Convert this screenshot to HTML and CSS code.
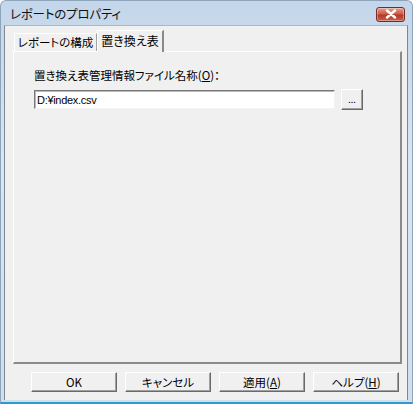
FILE: index.html
```html
<!DOCTYPE html>
<html lang="ja">
<head>
  <meta charset="UTF-8">
  <title>レポートのプロパティ</title>
  <link rel="stylesheet" href="styles.css">
</head>
<body>
  <div class="window">
    <div class="titlebar">
      <span class="title">レポートのプロパティ</span>
      <button class="close-btn" type="button">
        <svg viewBox="0 0 12 10" width="12" height="10">
          <path d="M2 1.5L10 8.5M10 1.5L2 8.5" stroke="#fff" stroke-width="2.4" stroke-linecap="round"/>
        </svg>
      </button>
    </div>
    <div class="client">
      <div class="tabs">
        <div class="tab">レポートの構成</div>
        <div class="tab active">置き換え表</div>
      </div>
      <div class="panel">
        <div class="field-label">置き換え表管理情報ファイル名称(<u>O</u>)：</div>
        <div class="field-row">
          <input class="text-input" type="text" value="D:¥index.csv">
          <button class="btn browse" type="button">...</button>
        </div>
      </div>
      <div class="actions">
        <button class="btn" type="button">OK</button>
        <button class="btn" type="button">キャンセル</button>
        <button class="btn" type="button">適用(<u>A</u>)</button>
        <button class="btn" type="button">ヘルプ(<u>H</u>)</button>
      </div>
    </div>
  </div>
</body>
</html>
```
FILE: styles.css
```css
body {
  margin: 0;
  background: #fff;
  font-family: "Noto Sans CJK JP", "Liberation Sans", sans-serif;
  font-feature-settings: "palt";
  color: #000;
}
.window {
  width: 413px;
  height: 404px;
  box-sizing: border-box;
  display: flex;
  flex-direction: column;
  background: linear-gradient(to bottom, #c4d6ea, #d9e5f2 40%, #d0dfee);
  border: 1px solid #8ea4bb;
  border-bottom: 2px solid #2f9bc8;
  border-radius: 6px 6px 0 0;
  padding: 0 4px 2px 3px;
}
.titlebar {
  height: 24px;
  display: flex;
  align-items: center;
  justify-content: space-between;
  padding: 0 3px 0 6px;
}
.title {
  font-size: 12.5px;
  letter-spacing: -0.2px;
  color: #111;
  margin-top: 1px;
}
.close-btn {
  width: 29px;
  height: 15px;
  margin-top: 2px;
  padding: 0;
  border: 1px solid #7a2a22;
  border-radius: 3px;
  background: linear-gradient(to bottom, #e3a092, #cf5a47 45%, #b23a25 55%, #c8624d);
  display: flex;
  align-items: center;
  justify-content: center;
  box-shadow: inset 0 0 0 1px rgba(255,255,255,0.35);
}
.client {
  flex: 1;
  display: flex;
  flex-direction: column;
  background: #f0f0f0;
  border-left: 1px solid #7f8890;
  border-right: 1px solid #7f8890;
  border-top: 1px solid #a9b8c8;
  padding: 4px 5px 8px 8px;
  font-size: 11.5px;
}
.tabs {
  display: flex;
  align-items: flex-end;
  height: 21px;
  padding-left: 1px;
  position: relative;
  z-index: 1;
}
.tab {
  height: 18px;
  line-height: 17px;
  padding: 0;
  border: 1px solid #fff;
  border-right: 1px solid #a0a0a0;
  border-bottom: none;
  box-sizing: border-box;
  background: #f0f0f0;
  width: 83px;
  text-align: center;
  white-space: nowrap;
}
.tab.active {
  height: 22px;
  line-height: 19px;
  width: 67px;
  margin-bottom: -1px;
  border-right: 2px solid #8a8a8a;
  font-size: 12px;
}
.panel {
  flex: 1;
  border: 1px solid #fff;
  border-right: 2px solid #8a8a8a;
  border-bottom: 2px solid #8a8a8a;
  padding: 16px 37px 0 20px;
}
.field-label {
  font-size: 11.5px;
  line-height: 14px;
  white-space: nowrap;
}
.field-label u,
.btn u {
  text-decoration-thickness: 1px;
}
.field-row {
  display: flex;
  align-items: center;
  gap: 6px;
  margin-top: 7px;
}
.text-input {
  flex: 1;
  height: 19px;
  box-sizing: border-box;
  border: 1px solid;
  border-color: #7a7a7a #f4f4f4 #f4f4f4 #7a7a7a;
  box-shadow: inset 1px 1px 0 #b8b8b8;
  background: #fff;
  padding: 0 2px;
  font-family: "Liberation Sans", sans-serif;
  font-size: 11px;
  letter-spacing: -0.3px;
  outline: none;
}
.btn {
  height: 20px;
  width: 86px;
  box-sizing: border-box;
  padding: 0;
  background: #f0f0f0;
  border: 1px solid;
  border-color: #fff #6a6a6a #6a6a6a #fff;
  box-shadow: inset -1px -1px 0 #a0a0a0;
  font-family: "Noto Sans CJK JP", "Liberation Sans", sans-serif;
  font-feature-settings: "palt";
  font-size: 11.5px;
  color: #000;
  line-height: 16px;
}
.btn.browse {
  width: 22px;
  height: 21px;
  font-size: 9px;
  line-height: 12px;
}
.actions {
  display: flex;
  justify-content: flex-end;
  gap: 8px;
  margin-top: 8px;
  padding-right: 3px;
}
```
